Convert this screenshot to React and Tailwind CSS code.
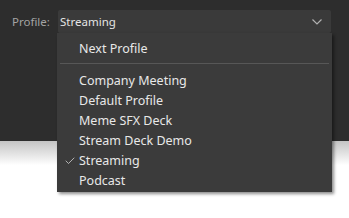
import { Check } from "lucide-react";

const profiles = [
  "Company Meeting",
  "Default Profile",
  "Meme SFX Deck",
  "Stream Deck Demo",
  "Streaming",
  "Podcast",
];

export default function App() {
  const current = "Streaming";

  return (
    <div
      className="w-[349px] h-[218px] overflow-hidden bg-white relative"
      style={{ fontFamily: '"Noto Sans", "Open Sans", sans-serif' }}
    >
      {/* top panel */}
      <div className="h-[141px] bg-[#2d2d2d] px-3 pt-[10px]">
        <div className="flex items-center">
          <span className="w-[46px] text-[11.5px] text-[#a3a3a3]">Profile:</span>
          <div className="w-[273px] h-[23px] rounded-[2px] bg-[#3a3a3a] flex items-center justify-between pl-[2px] pr-[9px]">
            <span className="text-[11.5px] text-[#e4e4e4]">{current}</span>
            <svg width="10" height="6" viewBox="0 0 10 6" className="text-[#b0b0b0]">
              <path d="M0.5 0.5 L5 5 L9.5 0.5" fill="none" stroke="currentColor" strokeWidth="1.2" />
            </svg>
          </div>
        </div>
      </div>
      <div className="h-[24px] bg-gradient-to-b from-[#c4c4c4] to-white" />

      {/* dropdown menu */}
      <div className="absolute left-[57px] top-[33px] w-[275px] bg-[#3b3b3b] pt-[6px] pb-[1px] shadow-[2px_2px_3px_rgba(0,0,0,0.45)]">
        <div className="h-[20px] flex items-center pl-[22px] text-[12.5px] text-[#e8e8e8]">
          Next Profile
        </div>
        <div className="mx-[3px] mt-[4px] mb-[7px] h-px bg-[#575757]" />
        {profiles.map((p) => (
          <div
            key={p}
            className="h-[20px] flex items-center relative pl-[22px] text-[12.5px] text-[#e8e8e8]"
          >
            {p === current && (
              <Check className="absolute left-[7px] w-[12px] h-[12px] text-[#d8d8d8]" strokeWidth={1.5} />
            )}
            {p}
          </div>
        ))}
      </div>
    </div>
  );
}
